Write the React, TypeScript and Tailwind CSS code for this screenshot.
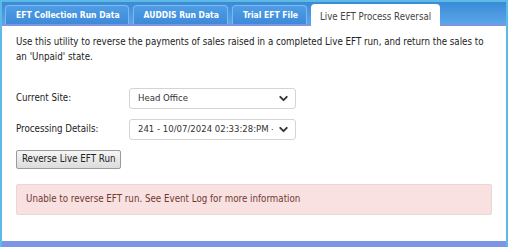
import { ChevronDown } from 'lucide-react'

const tabs = ['EFT Collection Run Data', 'AUDDIS Run Data', 'Trial EFT File']

function Select({ value }: { value: string }) {
  return (
    <div className="w-[167px] h-[21px] flex items-center justify-between border border-[#d4d4d4] rounded-[3px] bg-white pl-[8px] pr-[5px]">
      <span className="text-[9.5px] text-[#333] whitespace-nowrap overflow-hidden flex-1 mr-[4px]">{value}</span>
      <ChevronDown className="w-[13px] h-[13px] text-[#333] shrink-0" strokeWidth={3.5} />
    </div>
  )
}

export default function App() {
  return (
    <div className="w-[508px] h-[247px] bg-[#5bbbe6] p-[2px] pb-0 font-['DejaVu_Sans_Condensed','Liberation_Sans',sans-serif]">
      <div className="h-full flex flex-col">
        {/* tab strip */}
        <div className="h-[22px] bg-gradient-to-b from-[#3a8ad6] to-[#5aa6ea] flex items-end pl-[3px] gap-[4px]">
          {tabs.map((t) => (
            <div
              key={t}
              className="h-[19px] pl-[10px] pr-[8px] flex items-center whitespace-nowrap rounded-t-[4px] border border-b-0 border-[#7fb7ef] bg-gradient-to-b from-[#4e9de6] to-[#3d8bd8] text-white text-[8.5px] font-bold"
            >
              {t}
            </div>
          ))}
          <div className="h-[26px] -mb-[6px] px-[9px] flex items-center whitespace-nowrap rounded-t-[4px] bg-white text-[#444] text-[9.6px] relative z-10">
            Live EFT Process Reversal
          </div>
        </div>

        {/* panel */}
        <div className="flex-1 bg-white border-t-2 border-[#8094e4] border-b-[6px] border-b-[#7d95e6] px-[14px] pt-[8px]">
          <p className="text-[9.7px] leading-[15px] text-[#222]">
            Use this utility to reverse the payments of sales raised in a completed Live EFT run, and return the sales to an 'Unpaid' state.
          </p>

          <div className="mt-[24px] flex items-center">
            <span className="w-[113px] text-[9.7px] text-[#222]">Current Site:</span>
            <Select value="Head Office" />
          </div>
          <div className="mt-[10px] flex items-center">
            <span className="w-[113px] text-[9.7px] text-[#222]">Processing Details:</span>
            <Select value="241 - 10/07/2024 02:33:28:PM - 10/07/2024" />
          </div>

          <button className="mt-[10px] h-[19px] px-[5px] border border-[#9a9a9a] rounded-[2px] bg-gradient-to-b from-[#f5f5f5] to-[#dcdcdc] text-[9.7px] text-[#222]">
            Reverse Live EFT Run
          </button>

          <div className="mt-[15px] h-[31px] flex items-center px-[9px] bg-[#f9e1e1] border border-[#ebd7d2] rounded-[2px] text-[9.7px] text-[#6e3b30]">
            Unable to reverse EFT run. See Event Log for more information
          </div>
        </div>
      </div>
    </div>
  )
}
